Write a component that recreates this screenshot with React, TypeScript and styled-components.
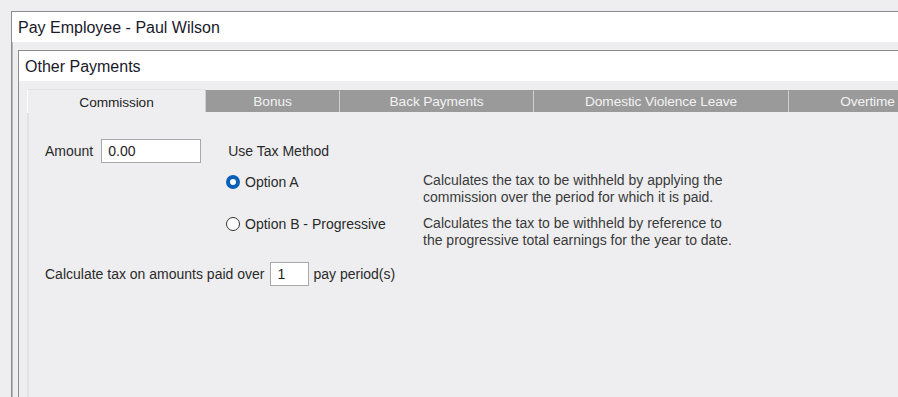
import React from "react";
import styled, { createGlobalStyle } from "styled-components";

const GlobalStyle = createGlobalStyle`
  html, body {
    margin: 0;
    padding: 0;
    height: 397px;
    overflow: hidden;
    background: #eeeef0;
  }
  body {
    font-family: "Liberation Sans", Arial, sans-serif;
    color: #1e1e1e;
  }
`;

const Page = styled.div`
  display: flex;
  padding: 11px 0 0 11px;
  height: 397px;
  box-sizing: border-box;
  overflow: hidden;
`;

const Window = styled.div`
  flex: 1;
  min-width: 0;
  display: flex;
  flex-direction: column;
  border-left: 1px solid #8c8c8c;
  border-top: 1px solid #8c8c8c;
  box-shadow: inset 1px 0 0 #b8b8b8;
`;

const TitleBar = styled.div`
  background: #ffffff;
  height: 29px;
  display: flex;
  align-items: center;
  padding: 1px 0 0 6px;
  font-size: 16px;
  color: #1a1a2a;
`;

const WindowBody = styled.div`
  flex: 1;
  display: flex;
  padding: 8px 0 0 6px;
`;

const GroupBox = styled.div`
  flex: 1;
  min-width: 0;
  display: flex;
  flex-direction: column;
  border-left: 1px solid #8c8c8c;
  border-top: 1px solid #8c8c8c;
`;

const GroupHeader = styled.div`
  background: #ffffff;
  height: 29px;
  display: flex;
  align-items: center;
  padding: 1px 0 0 6px;
  font-size: 16px;
  color: #1a1a2a;
`;

const GroupBody = styled.div`
  flex: 1;
  display: flex;
  flex-direction: column;
  padding: 8px 0 0 8px;
`;

const TabStrip = styled.div`
  display: flex;
  align-items: flex-end;
  height: 24px;
  overflow: hidden;
`;

const Tab = styled.div<{ $active?: boolean; $width: number }>`
  width: ${(p) => p.$width}px;
  flex-shrink: 0;
  box-sizing: border-box;
  height: ${(p) => (p.$active ? 24 : 22)}px;
  margin-bottom: ${(p) => (p.$active ? 0 : 1)}px;
  display: flex;
  align-items: center;
  justify-content: center;
  font-size: 13.7px;
  letter-spacing: -0.1px;
  background: ${(p) => (p.$active ? "#eeeef0" : "#9a9a9a")};
  color: ${(p) => (p.$active ? "#1e1e1e" : "#f2f2f2")};
  border-top: 1px solid ${(p) => (p.$active ? "#e2e2e4" : "#9a9a9a")};
  border-left: 1px solid ${(p) => (p.$active ? "#ffffff" : "#cfcfcf")};
  padding-top: ${(p) => (p.$active ? 1 : 0)}px;
`;

const TabPanel = styled.div`
  flex: 1;
  border-left: 2px solid #e2e2e4;
  padding: 26px 0 0 16px;
  font-size: 14px;
`;

const Row = styled.div`
  display: flex;
  align-items: center;
`;

const Label = styled.span<{ $before?: number; $after?: number }>`
  margin-left: ${(p) => p.$before ?? 0}px;
  margin-right: ${(p) => p.$after ?? 0}px;
  color: #2a2a2a;
  white-space: nowrap;
`;

const TextBox = styled.div<{ $width: number }>`
  width: ${(p) => p.$width}px;
  height: 24px;
  box-sizing: border-box;
  background: #ffffff;
  border: 1px solid #a8a8a8;
  display: flex;
  align-items: center;
  padding-left: 6px;
  font-size: 14px;
  color: #1e1e1e;
`;

const SectionTitle = styled.span`
  margin-left: 27px;
  color: #2a2a2a;
`;

const Options = styled.div`
  display: flex;
  flex-direction: column;
  gap: 9px;
  margin: 9px 0 0 181px;
`;

const OptionRow = styled.div`
  display: grid;
  grid-template-columns: 197px 340px;
`;

const RadioLabel = styled.label<{ $offset: number }>`
  display: flex;
  align-items: center;
  gap: 5px;
  padding-top: ${(p) => p.$offset}px;
  height: 17px;
  color: #2a2a2a;
`;

const RadioDot = styled.span<{ $checked?: boolean }>`
  width: 14px;
  height: 14px;
  box-sizing: border-box;
  border-radius: 50%;
  background: #ffffff;
  border: ${(p) => (p.$checked ? "4px solid #0a5fb8" : "1px solid #333333")};
`;

const Description = styled.div`
  line-height: 17px;
  color: #3a3a3a;
`;

const PeriodRow = styled(Row)`
  margin-top: 13px;
`;

const tabs = [
  { name: "Commission", width: 178, active: true },
  { name: "Bonus", width: 134 },
  { name: "Back Payments", width: 194 },
  { name: "Domestic Violence Leave", width: 255 },
  { name: "Overtime", width: 158 },
];

const options = [
  {
    label: "Option A",
    checked: true,
    offset: 1,
    text: [
      "Calculates the tax to be withheld by applying the",
      "commission over the period for which it is paid.",
    ],
  },
  {
    label: "Option B - Progressive",
    offset: 0,
    text: [
      "Calculates the tax to be withheld by reference to",
      "the progressive total earnings for the year to date.",
    ],
  },
];

export default function App() {
  return (
    <>
      <GlobalStyle />
      <Page>
        <Window>
          <TitleBar>Pay Employee - Paul Wilson</TitleBar>
          <WindowBody>
            <GroupBox>
              <GroupHeader>Other Payments</GroupHeader>
              <GroupBody>
                <TabStrip>
                  {tabs.map((t) => (
                    <Tab key={t.name} $active={t.active} $width={t.width}>
                      {t.name}
                    </Tab>
                  ))}
                </TabStrip>
                <TabPanel>
                  <Row>
                    <Label $after={8}>Amount</Label>
                    <TextBox $width={100}>0.00</TextBox>
                    <SectionTitle>Use Tax Method</SectionTitle>
                  </Row>
                  <Options>
                    {options.map((o) => (
                      <OptionRow key={o.label}>
                        <RadioLabel $offset={o.offset}>
                          <RadioDot $checked={o.checked} />
                          {o.label}
                        </RadioLabel>
                        <Description>
                          {o.text.map((line) => (
                            <div key={line}>{line}</div>
                          ))}
                        </Description>
                      </OptionRow>
                    ))}
                  </Options>
                  <PeriodRow>
                    <Label $after={6}>Calculate tax on amounts paid over</Label>
                    <TextBox $width={39}>1</TextBox>
                    <Label $before={4}>pay period(s)</Label>
                  </PeriodRow>
                </TabPanel>
              </GroupBody>
            </GroupBox>
          </WindowBody>
        </Window>
      </Page>
    </>
  );
}
